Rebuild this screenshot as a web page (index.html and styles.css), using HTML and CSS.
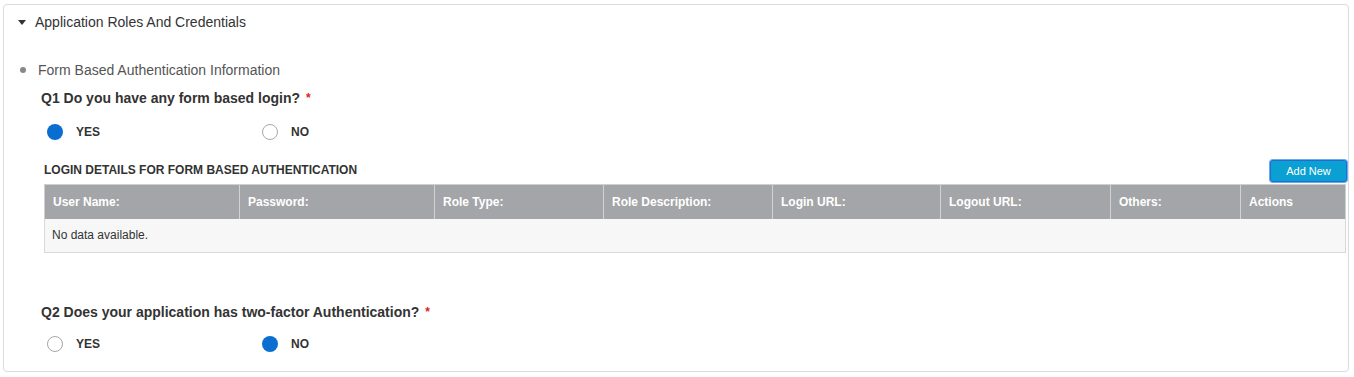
FILE: index.html
```html
<!DOCTYPE html>
<html lang="en">
<head>
    <meta charset="UTF-8">
    <title>Application Roles And Credentials</title>
    <link rel="stylesheet" href="styles.css">
</head>
<body>
    <div class="card">
        <div class="card-header">
            <span class="caret"></span>
            Application Roles And Credentials
        </div>

        <div class="section-title">
            <span class="dot"></span>
            Form Based Authentication Information
        </div>

        <div class="question q1">Q1 Do you have any form based login? <span class="req">*</span></div>
        <div class="radio-row">
            <label class="radio-option"><span class="radio checked"></span>YES</label>
            <label class="radio-option"><span class="radio"></span>NO</label>
        </div>

        <div class="grid-bar">
            <div class="grid-title">LOGIN DETAILS FOR FORM BASED AUTHENTICATION</div>
            <button class="add-button">Add New</button>
        </div>
        <table class="grid">
            <thead>
                <tr>
                    <th style="width:195px">User Name:</th>
                    <th style="width:195px">Password:</th>
                    <th style="width:169px">Role Type:</th>
                    <th style="width:169px">Role Description:</th>
                    <th style="width:168px">Login URL:</th>
                    <th style="width:170px">Logout URL:</th>
                    <th style="width:130px">Others:</th>
                    <th>Actions</th>
                </tr>
            </thead>
            <tbody>
                <tr>
                    <td colspan="8">No data available.</td>
                </tr>
            </tbody>
        </table>

        <div class="question q2">Q2 Does your application has two-factor Authentication? <span class="req">*</span></div>
        <div class="radio-row">
            <label class="radio-option"><span class="radio"></span>YES</label>
            <label class="radio-option"><span class="radio checked"></span>NO</label>
        </div>
    </div>
</body>
</html>
```

FILE: styles.css
```css
body {
    margin: 0;
    font-family: "Liberation Sans", Arial, Helvetica, sans-serif;
    color: #333;
    background: #fff;
}
.card {
    margin: 4px 5px 0 3px;
    height: 368px;
    box-sizing: border-box;
    border: 1px solid #dcdcdc;
    border-radius: 4px;
    padding: 7px 0 0 0;
}
.card-header {
    display: flex;
    align-items: center;
    height: 20px;
    font-size: 14px;
    color: #333;
    padding-left: 14px;
}
.caret {
    width: 0;
    height: 0;
    border-left: 4px solid transparent;
    border-right: 4px solid transparent;
    border-top: 5px solid #333;
    margin-right: 9px;
}
.section-title {
    display: flex;
    align-items: center;
    height: 20px;
    margin-top: 28px;
    padding-left: 16px;
    font-size: 14px;
    color: #555;
}
.dot {
    width: 6px;
    height: 6px;
    border-radius: 50%;
    background: #888;
    margin-right: 12px;
}
.question {
    height: 20px;
    line-height: 20px;
    padding-left: 37px;
    font-size: 14px;
    font-weight: bold;
    color: #333;
}
.q1 {
    margin-top: 8px;
}
.q2 {
    margin-top: 49px;
}
.req {
    color: #e02020;
    font-size: 12px;
    vertical-align: top;
    margin-left: 2px;
}
.radio-row {
    display: flex;
    height: 20px;
    margin-top: 14px;
    padding-left: 43px;
}
.q2 + .radio-row {
    margin-top: 12px;
}
.radio-option {
    display: flex;
    align-items: center;
    width: 215px;
    font-size: 12px;
    font-weight: bold;
    color: #333;
}
.radio {
    width: 14px;
    height: 14px;
    border-radius: 50%;
    border: 1px solid #a8a8a8;
    margin-right: 13px;
    background: #fff;
}
.radio.checked {
    width: 16px;
    height: 16px;
    border: none;
    background: #0a6ed1;
}
.grid-bar {
    display: flex;
    justify-content: space-between;
    align-items: flex-start;
    height: 24px;
    margin-top: 18px;
    margin-left: 40px;
    margin-right: 1px;
}
.grid-title {
    padding-top: 3px;
    line-height: 14px;
    font-size: 12px;
    font-weight: bold;
    color: #333;
}
.add-button {
    width: 77px;
    height: 22px;
    padding: 0;
    border: 1px solid #1b6fd0;
    border-radius: 3px;
    background: #0aa0d2;
    box-shadow: 0 0 0 1px #6fa8ee;
    color: #fff;
    font-family: inherit;
    font-size: 11px;
}
.grid {
    margin-left: 40px;
    width: 1302px;
    border-collapse: collapse;
    table-layout: fixed;
    font-size: 12px;
}
.grid th {
    height: 34px;
    box-sizing: border-box;
    padding: 0 8px;
    background: #a4a5a8;
    color: #fff;
    font-weight: bold;
    text-align: left;
    border-left: 1px solid #d2d2d4;
    border-top: 1px solid #cfcfcf;
}
.grid th:first-child {
    border-left: 1px solid #cfcfcf;
}
.grid th:last-child {
    border-right: 1px solid #cfcfcf;
}
.grid td {
    height: 34px;
    box-sizing: border-box;
    padding: 0 7px;
    background: #f7f7f7;
    color: #333;
    border: 1px solid #d9d9d9;
    border-top: none;
}
```
